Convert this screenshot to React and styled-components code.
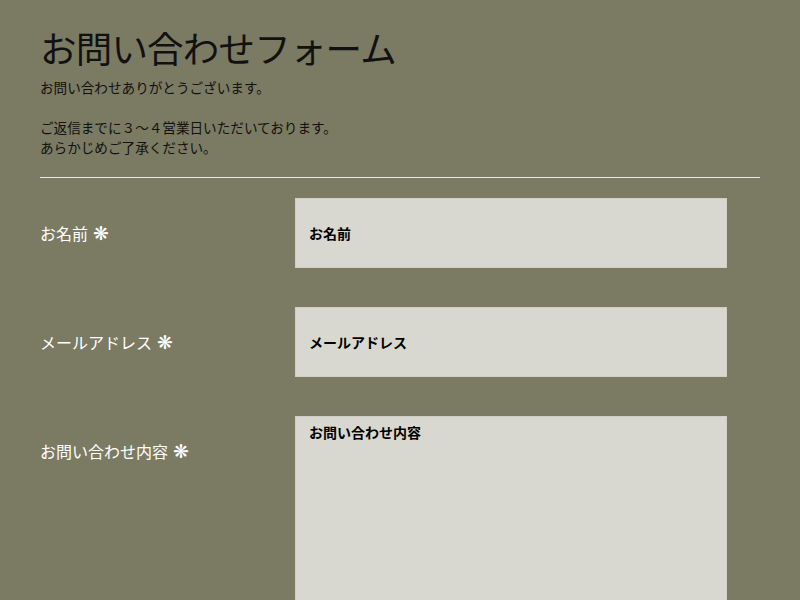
import React from 'react';
import styled, { createGlobalStyle } from 'styled-components';

const Global = createGlobalStyle`
  html, body {
    margin: 0;
    padding: 0;
    background: #7b7a62;
  }
  body {
    font-family: "Noto Sans CJK JP", "Noto Sans", sans-serif;
    color: #111;
  }
`

const Page = styled.div`
  padding: 26px 40px 0;
  width: 720px;
`

const Title = styled.h1`
  margin: 0;
  font-size: 36.5px;
  font-weight: 400;
  line-height: 44px;
  letter-spacing: -0.8px;
`

const Lead = styled.p`
  margin: 7px 0 0;
  font-size: 13.6px;
  line-height: 20px;
`

const Rule = styled.hr`
  margin: 20px 0 20px;
  border: 0;
  border-top: 1px solid #ecebdc;
`

const Form = styled.form`
  display: flex;
  flex-direction: column;
  gap: 39px;
`

const Row = styled.div`
  display: grid;
  grid-template-columns: 255px 432px;
  align-items: start;
`

const Label = styled.label`
  color: #fff;
  font-size: 16px;
  line-height: 70px;
  display: flex;
  align-items: center;
  gap: 5px;
`

const Mark = styled.span`
  font-family: "DejaVu Sans", sans-serif;
  font-size: 19px;
  font-weight: bold;
  line-height: 1;
`

const fieldStyle = `
  box-sizing: border-box;
  width: 100%;
  border: 1px solid #cfcfc5;
  background: #d8d8d0;
  font-family: "Noto Sans CJK JP", "Noto Sans", sans-serif;
  font-size: 14px;
  font-weight: bold;
  color: #000;
  padding: 0 13px;
  outline: none;
  &::placeholder {
    color: #000;
    opacity: 1;
  }
`

const Field = styled.input`
  ${fieldStyle}
  height: 70px;
`

const Area = styled.textarea`
  ${fieldStyle}
  height: 240px;
  padding-top: 4px;
  resize: none;
  line-height: 22px;
`

const fields = [
  { id: 'name', label: 'お名前' },
  { id: 'mail', label: 'メールアドレス' },
  { id: 'body', label: 'お問い合わせ内容', multi: true },
];

export default function App() {
  return (
    <Page>
      <Global />
      <Title>お問い合わせフォーム</Title>
      <Lead>
        お問い合わせありがとうございます。<br />
        <br />
        ご返信までに３〜４営業日いただいております。<br />
        あらかじめご了承ください。
      </Lead>
      <Rule />
      <Form>
        {fields.map(f => (
          <Row key={f.id}>
            <Label htmlFor={f.id}>{f.label}<Mark>❋</Mark></Label>
            {f.multi
              ? <Area id={f.id} placeholder={f.label} />
              : <Field id={f.id} placeholder={f.label} />}
          </Row>
        ))}
      </Form>
    </Page>
  );
}
